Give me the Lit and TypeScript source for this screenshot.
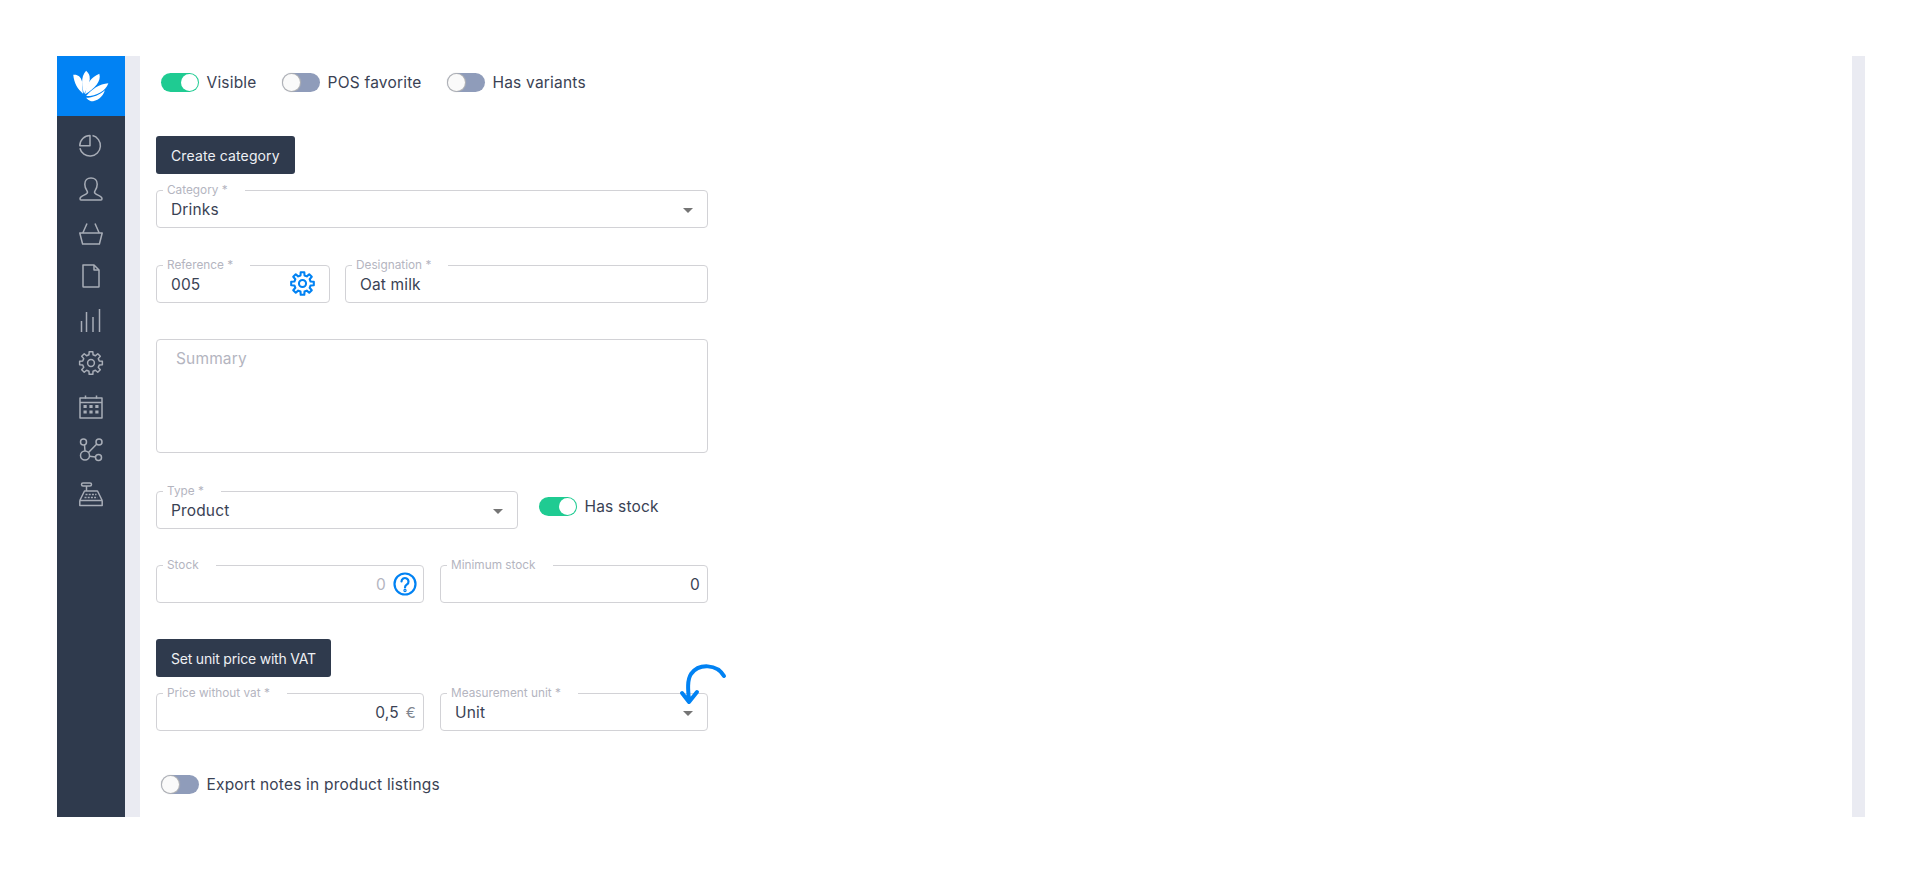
import { LitElement, html, css, svg } from "lit";
import { customElement } from "lit/decorators.js";

function gearPath(cx: number, cy: number, ro: number, ri: number, teeth = 8) {
  const pts: string[] = [];
  const step = (Math.PI * 2) / teeth;
  for (let i = 0; i < teeth; i++) {
    const a = i * step - Math.PI / 2;
    const w = step * 0.2;
    const w2 = step * 0.31;
    const p = (r: number, t: number) =>
      `${(cx + r * Math.cos(t)).toFixed(2)} ${(cy + r * Math.sin(t)).toFixed(2)}`;
    pts.push(p(ri, a - w2), p(ro, a - w), p(ro, a + w), p(ri, a + w2));
  }
  return "M" + pts.join("L") + "Z";
}

const navIcons = [
  svg`<path d="M11 1.500v10.300H.8A10.300 10.300 0 0 1 11 1.500Z"/><path d="M13.500 1.600A10.400 10.400 0 1 1 .9 14.200"/>`,
  svg`<path d="M2 23h20c.8 0 1-.6 1-1.300 0-3.400-7.500-3.600-7.500-6.500 0-1.300 2.700-3.400 2.700-8C18.200 3.300 15.600 1 12 1S5.800 3.300 5.800 7.200c0 4.600 2.700 6.700 2.700 8 0 2.900-7.500 3.100-7.500 6.500 0 .7.200 1.300 1 1.300Z"/>`,
  svg`<path d="M.8 12h22.400l-2.800 11H3.600L.8 12Z"/><path d="M3.800 12 8 2.500M20.200 12 16 2.500"/>`,
  svg`<path d="M4 1h11l5 5v16.500a.5.5 0 0 1-.5.5h-15a.5.5 0 0 1-.5-.5V1.500A.5.5 0 0 1 4 1Z"/><path d="M15 1v5h5"/>`,
  svg`<path d="M2.500 24V13M7.500 24V4M14 24V9M20.500 24V1"/>`,
  svg`<path d=${gearPath(12, 12, 11.5, 8.5)}/><circle cx="12" cy="12" r="3.400"/>`,
  svg`<rect x="1" y="3" width="22" height="20"/><path d="M1 7.500h22M6.500 .5v3M17.500 .5v3"/><path stroke="none" fill="currentColor" d="M4.500 10h3.200v3H4.500zM10.400 10h3.200v3h-3.200zM16.300 10h3.200v3h-3.200zM4.500 15.500h3.200v3H4.500zM10.400 15.500h3.200v3h-3.200zM16.300 15.500h3.200v3h-3.200z"/>`,
  svg`<circle cx="4.500" cy="4" r="3"/><circle cx="20" cy="4" r="3"/><circle cx="6" cy="17.500" r="4.500"/><circle cx="19.500" cy="19.500" r="3"/><path d="M5.500 7 6 13M17.800 6 9.500 14.500M10.500 18.300 16.500 19"/>`,
  svg`<path d="M.8 23.500h22.400V18.500H.8ZM.8 18.500 5.500 9h13l4.700 9.500"/><path d="M7.500 9V4M4 1h7a1.500 1.500 0 0 1 0 3H4a1.500 1.500 0 0 1 0-3Z"/><path d="M6.500 12.500h11M5.500 15.500h13" stroke-dasharray="2 1.200"/>`,
];

@customElement("app-root")
export class AppRoot extends LitElement {
  static styles = css`
    :host { display: block; height: 873px; background: #fff; font-family: Inter, "Open Sans", sans-serif; color: #3a4254; }
    * { box-sizing: border-box; }
    .page { padding: 56px 55px 0 57px; position: relative; }
    .shell { display: flex; height: 761px; }
    .side { width: 68px; background: #2f3a4d; flex: none; }
    .logo { height: 60px; background: #0182f3; display: flex; align-items: center; justify-content: center; }
    .logo svg { width: 36px; height: 32px; fill: #fff; margin-left: -1px; }
    .nav { display: flex; flex-direction: column; padding-top: 8px; }
    .nav div { height: 43.5px; display: flex; align-items: center; justify-content: center; color: #a8adb7; }
    .nav svg { width: 24px; height: 24px; fill: none; stroke: currentColor; stroke-width: 1.5; stroke-linejoin: round; overflow: visible; }
    .strip { width: 15px; background: #eaebf2; flex: none; }
    .strip.r { width: 13px; }
    .main { flex: 1; padding: 17px 0 0 16px; }
    .col { width: 552px; display: flex; flex-direction: column; }
    .row { display: flex; }
    .halves { display: grid; grid-template-columns: 1fr 1fr; gap: 16px; }
    .tog { display: flex; align-items: center; gap: 7.5px; font-size: 15.5px; letter-spacing: .2px; height: 19px; white-space: nowrap; }
    .toggles { padding-left: 5px; gap: 25.5px; margin-bottom: 44px; }
    .sw { width: 38px; height: 19px; border-radius: 10px; background: #8f9cba; position: relative; flex: none; }
    .sw::after { content: ""; position: absolute; top: 1px; left: 1px; width: 17px; height: 17px; border-radius: 50%; background: #fafafa; box-shadow: 0 0 1px 1px #b5b5b5; }
    .sw.on { background: #1fcb92; }
    .sw.on::after { left: 20px; background: #fff; box-shadow: none; }
    .btn { align-self: flex-start; height: 38px; padding: 0 15px; background: #2f3a4d; color: #eef0f4; border-radius: 3px; font-size: 14px; letter-spacing: .12px; display: flex; align-items: center; white-space: nowrap; }
    .btn.tight { letter-spacing: -.2px; }
    .field { position: relative; height: 38px; border: 1px solid #d2d2d6; border-radius: 4px; display: flex; align-items: center; padding: 0 14px; font-size: 15.5px; letter-spacing: .15px; flex: 1; min-width: 0; }
    .lbl { position: absolute; top: -8px; left: 6px; padding: 0 17px 0 4px; background: #fff; font-size: 11.8px; letter-spacing: 0; line-height: 14px; color: #b4b5bf; white-space: nowrap; }
    .end { justify-content: flex-end; padding-right: 7px; }
    .caret { position: absolute; right: 14px; top: 17px; width: 0; height: 0; border-left: 5px solid transparent; border-right: 5px solid transparent; border-top: 5px solid #757575; }
    .ico { position: absolute; right: 14px; top: 5px; width: 25px; height: 25px; color: #0182f3; }
    .q { width: 24px; height: 24px; margin-left: 7px; margin-right: -1px; color: #0182f3; flex: none; }
    .muted { color: #b4b5bf; }
    .eur { font-size: 15px; margin-left: 7px; margin-right: 0; color: #80858f; }
    .m16 { margin-top: 16px; }
    .m36 { margin-top: 36px; }
    .m37 { margin-top: 37px; }
    .m38 { margin-top: 38px; }
    .g15 { gap: 15px; }
    .ref { flex: none; width: 174px; }
    .sum { height: 114px; align-items: flex-start; padding: 9px 19px; color: #b4b5bf; }
    .type { flex: none; width: 362px; }
    .stockt { margin: 6px 0 0 21px; }
    .exp { margin: 44px 0 0 5px; }
    .arrow { position: absolute; left: 675px; top: 660px; width: 56px; height: 50px; fill: none; stroke: #0182f3; stroke-width: 4; stroke-linecap: round; stroke-linejoin: round; overflow: visible; }
  `;

  render() {
    return html`<div class="page">
      <div class="shell">
        <aside class="side">
          <div class="logo"><svg viewBox="97 90 102 92">
            <path d="M97 104C108 102 118 108 122 122C123 135 124 148 125 158C110 146 99 128 97 104Z"/>
            <path d="M134 92C148 104 150 122 128 158C122 140 117 110 134 92Z"/>
            <path d="M172 101C178 122 160 142 131 160C134 132 148 110 172 101Z"/>
            <path d="M198 128C190 150 165 165 134 165C150 145 172 130 198 128Z"/>
            <path d="M134 170C152 170 175 160 188 148C182 168 165 180 148 180C142 178 137 174 134 170Z"/>
          </svg></div>
          <nav class="nav">${navIcons.map((i) => html`<div><svg viewBox="0 0 24 24">${i}</svg></div>`)}</nav>
        </aside>
        <div class="strip"></div>
        <main class="main">
          <div class="col">
            <div class="row toggles">
              <div class="tog"><span class="sw on"></span>Visible</div>
              <div class="tog"><span class="sw"></span>POS favorite</div>
              <div class="tog"><span class="sw"></span>Has variants</div>
            </div>
            <div class="btn">Create category</div>
            <div class="row m16"><div class="field"><span class="lbl">Category *</span>Drinks<span class="caret"></span></div></div>
            <div class="row m37 g15">
              <div class="field ref"><span class="lbl">Reference *</span>005
                <svg class="ico" viewBox="0 0 24 24" fill="none" stroke="currentColor" stroke-width="2" stroke-linejoin="round"><path d=${gearPath(12, 12, 11, 8)}></path><circle cx="12" cy="12" r="3.400"></circle></svg>
              </div>
              <div class="field"><span class="lbl">Designation *</span>Oat milk</div>
            </div>
            <div class="row m36"><div class="field sum">Summary</div></div>
            <div class="row m38">
              <div class="field type"><span class="lbl">Type *</span>Product<span class="caret"></span></div>
              <div class="tog stockt"><span class="sw on"></span>Has stock</div>
            </div>
            <div class="halves m36">
              <div class="field end"><span class="lbl">Stock</span><span class="muted">0</span>
                <svg class="q" viewBox="0 0 24 24" fill="none" stroke="currentColor" stroke-width="2.200"><circle cx="12" cy="12" r="10.500"></circle><path stroke-linecap="round" d="M8.500 9.500a3.500 3.500 0 1 1 5.500 2.900c-1.300.9-2 1.500-2 3"></path><circle cx="12" cy="18.500" r=".6"></circle></svg>
              </div>
              <div class="field end"><span class="lbl">Minimum stock</span>0</div>
            </div>
            <div class="btn tight m36">Set unit price with VAT</div>
            <div class="halves m16">
              <div class="field end"><span class="lbl">Price without vat *</span>0,5<span class="eur">€</span></div>
              <div class="field"><span class="lbl">Measurement unit *</span>Unit<span class="caret"></span></div>
            </div>
            <div class="tog exp"><span class="sw"></span>Export notes in product listings</div>
          </div>
        </main>
        <div class="strip r"></div>
      </div>
      <svg class="arrow" viewBox="0 0 56 50"><path d="M49 16C42 4 24 3 16 14C12 20 13 30 14 41M7 33l7 9 8-10"></path></svg>
    </div>`;
  }
}
